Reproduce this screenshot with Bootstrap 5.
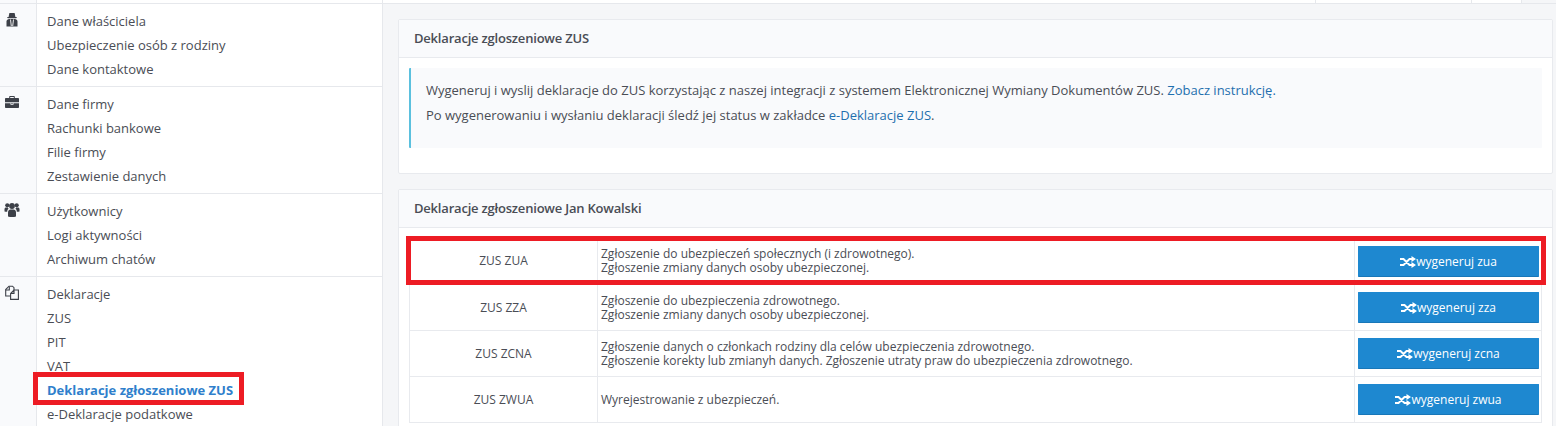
<!DOCTYPE html>
<html lang="pl">
<head>
<meta charset="utf-8">
<title>Deklaracje zgłoszeniowe ZUS</title>
<link rel="stylesheet" href="https://cdn.jsdelivr.net/npm/bootstrap@5.3.0/dist/css/bootstrap.min.css">
<style>
html,body{height:100%;overflow:hidden}
body{font-family:"Open Sans",sans-serif;font-size:13px;line-height:18px;color:#4a4d55;background:#f5f6f8}
.topstrip{height:4px;background:#fff;border-bottom:1px solid #e6e8ec;display:flex}
.ts-rail{width:37px;background:#f9fafc;border-right:1px solid #e6e8ec}
.ts-panel{width:346px;border-right:1px solid #e6e8ec}
.ts-a{width:933px;border-right:1px solid #e6e8ec}
.ts-b{width:156px;border-right:1px solid #e6e8ec}
.ts-c{width:50px;border-right:1px solid #e6e8ec}
.ts-d{flex:1;background:#f5f6f8}
.shell{display:flex;height:422px;overflow:hidden}
.side{width:383px;flex:none;background:#fff;border-right:1px solid #e6e8ec}
.sgroup{display:flex;border-bottom:1px solid #e6e8ec}
.srail{width:37px;flex:none;background:#f9fafc;border-right:1px solid #e6e8ec;padding:8px 0 0 4px}
.srail svg{display:block;fill:#3d4048}
.ico-line{fill:none!important;stroke:#3d4048;stroke-width:1.1}
.slinks{list-style:none;margin:0;padding:5px 0 5px 10px;position:relative}
.slinks li{height:24px;line-height:24px;white-space:nowrap}
.slinks a{color:#4a4d55;text-decoration:none}
.slinks a.on{color:#2f7fcc;font-weight:700}
.hl-wrap{position:relative;display:inline-block}
.redmark{position:absolute;border:5px solid #ed1c24;pointer-events:none}
.redmark-side{left:-14px;top:-6px;width:211px;height:33px}
.main{flex:1;padding:15px 3px 0 15px;min-width:0}
.zcard{border:1px solid #e8eaee;border-radius:2px;background:#fff;margin-bottom:15px;box-shadow:none}
.zcard .card-header{background:#f9fafc;border-bottom:1px solid #e8eaee;padding:0 15px;height:38px;line-height:37px;font-weight:600;letter-spacing:-.2px;color:#4a4d55;font-size:13px;border-radius:0}
.zcard .card-body{padding:10px 10px 25px}
.note{background:#f9fafc;border-left:2px solid #5bc0de;border-radius:1px;padding:10px 15px 0;height:80px}
.note p{margin:0;line-height:25px}
.note a{color:#1f6fae;text-decoration:none}
.tbl-body{padding:10px 10px 0!important;position:relative;height:200px}
.ztable{margin:0;table-layout:fixed;width:100%;border-color:#e8eaee;color:#4a4d55;font-size:12px;line-height:14px;--bs-table-color:#4a4d55}
.ztable td{height:46px;padding:0 3px;vertical-align:middle;border:1px solid #e8eaee}
.ztable td:first-child{text-align:center;width:188px;font-size:12px}
.ztable td:last-child{width:187px;padding:0 3px}
.ztable tr:first-child td:not(:last-child){padding-bottom:2px}
.gen{display:flex;align-items:center;justify-content:center;width:181px;height:31px;padding:0;background:#1e88d0;border:1px solid #1e88d0;border-bottom-color:#1877b8;border-radius:1px;color:#fff;font-size:12px;line-height:1}
.gen:hover{background:#1e88d0;color:#fff}
.gen svg{flex:none}
.redmark-row{left:-3px;right:-4px;top:-2px;height:49px}
.tbl-wrap{position:relative}
</style>
</head>
<body>
<svg width="0" height="0" class="position-absolute">
  <symbol id="shuf" viewBox="0 0 16 12">
    <path d="M0 3h3.500l6 6H12M0 9h3.500l6-6H12" fill="none" stroke="#fff" stroke-width="2"/>
    <path d="M11.500 0 16 3l-4.500 3zM11.500 6 16 9l-4.500 3z" fill="#fff"/>
  </symbol>
</svg>
<div class="topstrip">
  <div class="ts-rail"></div><div class="ts-panel"></div><div class="ts-a"></div><div class="ts-b"></div><div class="ts-c"></div><div class="ts-d"></div>
</div>
<div class="shell">
  <aside class="side">
    <div class="sgroup">
      <div class="srail"><svg width="16" height="16" viewBox="0 0 16 16"><path d="M5.300 1.200c.5-.6 1.200-.1 2.700-.1s2.200-.5 2.700.1L11.400 5H13l-.8 1.200H3.800L3 5h1.600z"/><path d="M2.500 14.500V9.500C2.500 8 3.700 7 5.300 7h5.400c1.600 0 2.800 1 2.800 2.500v5z"/><path d="M6.500 7.500 7.300 14M9.500 7.500 8.700 14" fill="none" stroke="#fff" stroke-width=".9"/></svg></div>
      <ul class="slinks"><li><a href="#">Dane właściciela</a></li><li><a href="#">Ubezpieczenie osób z rodziny</a></li><li><a href="#">Dane kontaktowe</a></li></ul>
    </div>
    <div class="sgroup">
      <div class="srail"><svg width="16" height="16" viewBox="0 0 16 16"><path d="M5.200 3V1.700c0-.4.300-.7.700-.7h4.200c.4 0 .7.300.7.700V3h3.400c.5 0 .8.300.8.800v3.400H1V3.800c0-.5.300-.8.800-.8zm1-1v1h3.600V2z"/><path d="M1 8.200h5.500v1.500h3V8.200H15v4c0 .5-.3.800-.8.800H1.800c-.5 0-.8-.3-.8-.8z"/><path d="M7.200 8.200h1.600v.8H7.200z"/></svg></div>
      <ul class="slinks"><li><a href="#">Dane firmy</a></li><li><a href="#">Rachunki bankowe</a></li><li><a href="#">Filie firmy</a></li><li><a href="#">Zestawienie danych</a></li></ul>
    </div>
    <div class="sgroup">
      <div class="srail"><svg width="16" height="16" viewBox="0 0 16 16"><circle cx="3.300" cy="3.300" r="2.100"/><circle cx="12.700" cy="3.300" r="2.100"/><circle cx="8" cy="4" r="2.900"/><path d="M4 14.500v-4C4 8.500 5.200 7.500 6.500 7.500h3c1.300 0 2.500 1 2.500 3v4c-2 .8-6 .8-8 0z"/><path d="M.5 9.500V7c0-1 .7-1.600 1.700-1.600h1.500c.2.500.5 1 1 1.300C3.700 7.100 3.200 8.300 3.200 9.700c-1 0-2-.1-2.700-.2zM15.500 9.500V7c0-1-.7-1.600-1.700-1.600h-1.500c-.2.500-.5 1-1 1.300 1 .4 1.500 1.600 1.500 3 1 0 2-.1 2.700-.2z"/></svg></div>
      <ul class="slinks"><li><a href="#">Użytkownicy</a></li><li><a href="#">Logi aktywności</a></li><li><a href="#">Archiwum chatów</a></li></ul>
    </div>
    <div class="sgroup">
      <div class="srail"><svg width="16" height="16" viewBox="0 0 16 16"><path class="ico-line" d="M6.500 11H1.700V4.500L5 1.200h3.500l1.500 1.500V5"/><path class="ico-line" d="M5.300 1.500V5H1.800"/><path class="ico-line" d="M10 5h4.400v9.400H6.600V8.400zM10 5v3.400H6.600"/></svg></div>
      <ul class="slinks"><li><a href="#">Deklaracje</a></li><li><a href="#">ZUS</a></li><li><a href="#">PIT</a></li><li><a href="#">VAT</a></li><li><span class="hl-wrap"><a class="on" href="#">Deklaracje zgłoszeniowe ZUS</a><span class="redmark redmark-side"></span></span></li><li><a href="#">e-Deklaracje podatkowe</a></li></ul>
    </div>
  </aside>
  <main class="main">
    <section class="card zcard">
      <div class="card-header">Deklaracje zgloszeniowe ZUS</div>
      <div class="card-body">
        <div class="note">
          <p>Wygeneruj i wyslij deklaracje do ZUS korzystając z naszej integracji z systemem Elektronicznej Wymiany Dokumentów ZUS. <a href="#">Zobacz instrukcję.</a></p>
          <p>Po wygenerowaniu i wysłaniu deklaracji śledź jej status w zakładce <a href="#">e-Deklaracje ZUS</a>.</p>
        </div>
      </div>
    </section>
    <section class="card zcard">
      <div class="card-header">Deklaracje zgłoszeniowe Jan Kowalski</div>
      <div class="card-body tbl-body">
        <div class="tbl-wrap">
          <table class="table table-bordered ztable">
            <tbody>
              <tr><td>ZUS ZUA</td><td>Zgłoszenie do ubezpieczeń społecznych (i zdrowotnego).<br>Zgłoszenie zmiany danych osoby ubezpieczonej.</td><td><button type="button" class="btn gen"><svg width="16" height="12"><use href="#shuf"/></svg>wygeneruj zua</button></td></tr>
              <tr><td>ZUS ZZA</td><td>Zgłoszenie do ubezpieczenia zdrowotnego.<br>Zgłoszenie zmiany danych osoby ubezpieczonej.</td><td><button type="button" class="btn gen"><svg width="16" height="12"><use href="#shuf"/></svg>wygeneruj zza</button></td></tr>
              <tr><td>ZUS ZCNA</td><td>Zgłoszenie danych o członkach rodziny dla celów ubezpieczenia zdrowotnego.<br>Zgłoszenie korekty lub zmianyh danych. Zgłoszenie utraty praw do ubezpieczenia zdrowotnego.</td><td><button type="button" class="btn gen"><svg width="16" height="12"><use href="#shuf"/></svg>wygeneruj zcna</button></td></tr>
              <tr><td>ZUS ZWUA</td><td>Wyrejestrowanie z ubezpieczeń.</td><td><button type="button" class="btn gen"><svg width="16" height="12"><use href="#shuf"/></svg>wygeneruj zwua</button></td></tr>
            </tbody>
          </table>
          <span class="redmark redmark-row"></span>
        </div>
      </div>
    </section>
  </main>
</div>
<script src="https://cdn.jsdelivr.net/npm/bootstrap@5.3.0/dist/js/bootstrap.bundle.min.js"></script>
</body>
</html>
